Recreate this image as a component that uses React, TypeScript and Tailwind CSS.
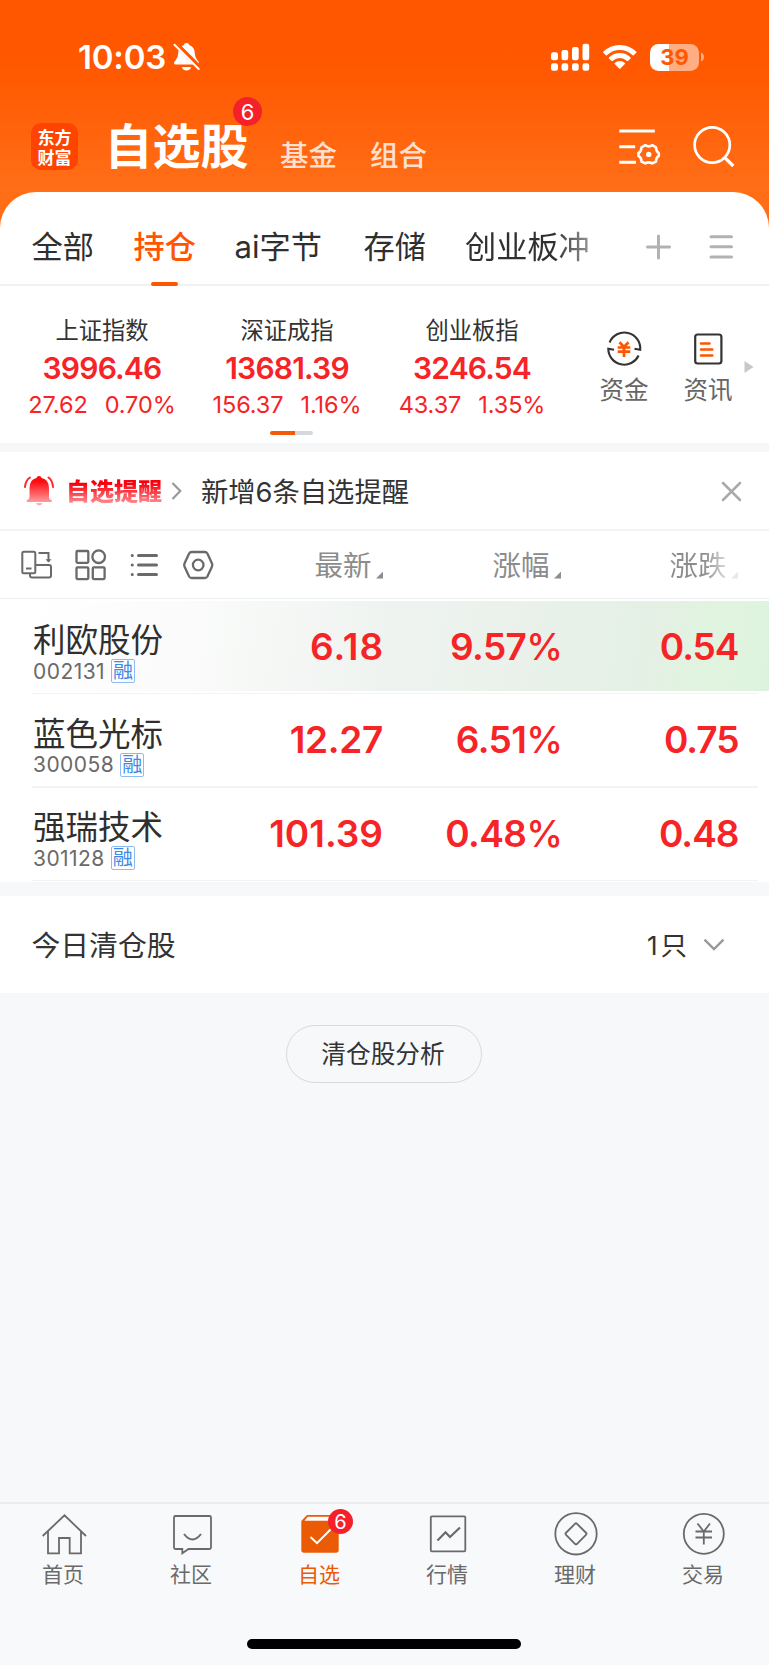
import React from "react";

const FONT = "font-['Inter','Noto_Sans_CJK_SC',sans-serif]";

function StatusBar() {
  return (
    <div className="flex h-[114px] items-center pl-[78px]">
      <span className="w-[92px] whitespace-nowrap text-[33px] font-semibold leading-none tracking-[-0.2px] text-white">10:03</span>
      <svg className="ml-[2px] h-[30px] w-[30px]" viewBox="172 43 30 30">
        <path d="M176 65.500Q174 65.500 174 63.900Q174 62.800 175.500 61.400Q178 59 178.200 54.500C178.500 49.500 180.500 47.300 183.500 46.200Q184.200 44 186.500 44Q188.800 44 189.500 46.200C193 47.500 194.600 50 194.800 54.500Q195 59 197.500 61.400Q199 62.800 199 64Q199 65.500 197 65.500Z" fill="#fff" />
        <path d="M181.700 68H191.300Q190 71.500 186.500 71.500Q183 71.500 181.700 68Z" fill="#fff" />
        <path d="M175 44L200 69" stroke="#ff5800" strokeWidth="5" />
        <path d="M174.500 45.800L198.700 70" stroke="#fff" strokeWidth="2" strokeLinecap="round" />
      </svg>
      <svg className="ml-[347.500px] h-[30px] w-[40px]" viewBox="550 42 40 30" fill="#fff">
        <rect x="551" y="52.200" width="7" height="8" rx="2.200" />
        <rect x="561.500" y="50" width="6.700" height="10.200" rx="2.200" />
        <rect x="572" y="47" width="6.700" height="13.200" rx="2.200" />
        <rect x="582.500" y="43.800" width="6.700" height="16.400" rx="2.200" />
        <rect x="551" y="63.200" width="7" height="7.600" rx="2.200" />
        <rect x="561.500" y="63.200" width="6.700" height="7.600" rx="2.200" />
        <rect x="572" y="63.200" width="6.700" height="7.600" rx="2.200" />
        <rect x="582.500" y="63.200" width="6.700" height="7.600" rx="2.200" />
      </svg>
      <svg className="ml-[13px] h-[26px] w-[34px]" viewBox="603 44 34 26" fill="#fff">
        <path d="M603.300 51.800Q610 45 619.800 45Q629.500 45 636.300 51.800Q636.700 52.300 636.300 52.800L633.700 55.300Q633.200 55.700 632.700 55.300Q627 50.100 619.800 50.100Q612.500 50.100 606.900 55.300Q606.400 55.700 605.900 55.300L603.300 52.800Q602.900 52.300 603.300 51.800Z" />
        <path d="M609 57.400Q613.600 53 619.800 53Q626 53 630.600 57.400Q631.100 57.900 630.600 58.400L628 60.900Q627.500 61.300 627 60.900Q623.800 58.100 619.800 58.100Q615.700 58.100 612.600 60.900Q612.100 61.300 611.600 60.900L609 58.400Q608.500 57.900 609 57.400Z" />
        <path d="M614.700 63Q616.900 61 619.800 61Q622.700 61 624.900 63Q625.400 63.500 624.900 64L620.400 68.500Q619.800 69 619.200 68.500L614.700 64Q614.200 63.500 614.700 63Z" />
      </svg>
      <div className="ml-[13.500px] flex h-[27px] w-[49px] items-center justify-center rounded-[8.500px] bg-[linear-gradient(90deg,#fff_0_39%,#ffad82_39%_100%)] text-[22px] font-bold leading-none text-[#ff5800]">39</div>
      <svg className="ml-[1.500px] h-[10px] w-[3px]" viewBox="0 0 3 10"><path d="M0 .5Q3 2 3 5Q3 8 0 9.500Z" fill="#ffad82" /></svg>
    </div>
  );
}

function TitleBar() {
  return (
    <div className="flex h-[78px] items-start pl-[31px]">
      <div className="mt-[9px] flex h-[47px] w-[47px] flex-col items-center justify-center rounded-[10px] bg-[#ff4300] font-['Noto_Sans_CJK_SC',sans-serif] text-[17px] font-bold leading-[19.500px] text-white">
        <span>东方</span>
        <span>财富</span>
      </div>
      <div className="relative ml-[26.500px] w-[175.500px]">
        <h1 className="mt-[9px] whitespace-nowrap text-[48px] font-bold leading-[47px] text-white">自选股</h1>
        <span className="absolute left-[128.500px] top-[-17px] flex h-[29px] w-[29px] items-center justify-center rounded-full bg-[#f4212b] text-[22px] leading-none text-white">6</span>
      </div>
      <span className="mt-[28px] w-[90px] whitespace-nowrap text-[28.500px] font-medium leading-[28px] text-[#ffe0d0]">基金</span>
      <span className="mt-[28px] w-[90px] whitespace-nowrap text-[28.500px] font-medium leading-[28px] text-[#ffe0d0]">组合</span>
      <svg className="ml-[158px] mt-[12px] h-[42px] w-[44px]" viewBox="618 126 44 42" fill="none" stroke="#fff" strokeWidth="3">
        <path d="M619.300 131H654.800M619.300 146.700H635.200M619.300 162.300H636" />
        <path d="M645.200 145.200Q648.800 147.500 652.300 145.200L656 147.300Q655.900 151.300 658.800 153V155.800Q655.900 157.500 656 161.500L652.300 163.400Q648.800 161.300 645.200 163.400L641.500 161.500Q641.600 157.500 638.500 155.800V153Q641.600 151.300 641.500 147.300Z" strokeWidth="2.600" strokeLinejoin="round" />
        <circle cx="648.700" cy="154.400" r="2.700" fill="#fff" stroke="none" />
      </svg>
      <svg className="ml-[30px] mt-[10px] h-[44px] w-[44px]" viewBox="692 124 44 44" fill="none" stroke="#fff" strokeWidth="2.700">
        <circle cx="712.200" cy="145" r="17.600" />
        <path d="M724.500 157.300L733.300 166" strokeWidth="3.200" />
      </svg>
    </div>
  );
}

function Tabs() {
  return (
    <div className="bg-[#ff6e17]">
      <nav className="flex h-[94px] items-stretch whitespace-nowrap rounded-t-[36px] border-b-2 border-[#f0f1f2] bg-white pl-[31.500px] text-[31.200px] leading-none text-[#2f2f2f]">
        <span className="flex w-[102px] items-center pt-[19px]">全部</span>
        <span className="relative flex w-[101px] items-center pt-[19px] font-medium text-[#ff5500]">
          持仓
          <i className="absolute bottom-[-2px] left-[17.500px] h-[4px] w-[27px] rounded-[2px] bg-[#ff5500]" />
        </span>
        <span className="flex w-[129px] items-center pt-[19px]">ai字节</span>
        <span className="flex w-[101.500px] items-center pt-[19px]">存储</span>
        <span className="flex w-[180px] items-center pt-[19px]">
          <span className="w-[126px] bg-[linear-gradient(90deg,#2f2f2f_70%,#999_100%)] bg-clip-text py-2 text-transparent">创业板冲</span>
        </span>
        <svg className="mt-[42px] h-[26px] w-[26px]" viewBox="645 234 26 26" stroke="#b2b2b2" strokeWidth="3" strokeLinecap="round"><path d="M647.500 247H669.500M658.500 236V258" /></svg>
        <svg className="ml-[37px] mt-[42px] h-[26px] w-[26px]" viewBox="708 234 26 26" stroke="#b2b2b2" strokeWidth="3" strokeLinecap="round"><path d="M711 236.700H731.500M711 246.800H731.500M711 257H731.500" /></svg>
      </nav>
    </div>
  );
}

function IndexCell({ name, value, change, pct }: { name: string; value: string; change: string; pct: string }) {
  return (
    <div className="flex w-[185px] flex-col items-center whitespace-nowrap text-[#f62426]">
      <span className="mt-[1px] text-[23.300px] leading-[36px] text-[#333]">{name}</span>
      <span className="mt-[-1px] text-[30px] font-semibold leading-[40px] tracking-[-0.800px]">{value}</span>
      <span className="mt-[-1px] flex gap-[17px] text-[23.500px] leading-[36px] tracking-[-0.100px]"><span>{change}</span><span>{pct}</span></span>
    </div>
  );
}

function Indices() {
  return (
    <section className="flex h-[157px] bg-white pl-[9.500px] pt-[26px]">
      <IndexCell name="上证指数" value="3996.46" change="27.62" pct="0.70%" />
      <div className="relative">
        <IndexCell name="深证成指" value="13681.39" change="156.37" pct="1.16%" />
        <i className="absolute left-[75.500px] top-[119px] h-[4px] w-[43px] rounded-full bg-[linear-gradient(90deg,#f05a0a_0_59%,#d5d8dd_59%_100%)]" />
      </div>
      <IndexCell name="创业板指" value="3246.54" change="43.37" pct="1.35%" />
      <div className="ml-[17.500px] flex w-[84px] flex-col items-center pt-[18px]">
        <svg className="h-[38px] w-[38px]" viewBox="605 330 38 38" fill="none" stroke="#333" strokeWidth="2.100">
          <path d="M609.600 342.500A15.900 15.900 0 0 1 640.200 349.800L634.500 348.700M638.600 355.500A15.900 15.900 0 0 1 608.300 348.800L614 349.700" />
          <path d="M619.500 342.300L624 347L628.500 342.300M617.700 347.500H630.300M617.700 351.700H630.300M624 347V357" stroke="#ff5500" strokeWidth="2.700" />
        </svg>
        <span className="mt-[7px] text-[24.500px] leading-[30px] text-[#666]">资金</span>
      </div>
      <div className="flex w-[84px] flex-col items-center pt-[18px]">
        <svg className="h-[38px] w-[38px]" viewBox="689 330 38 38" fill="none" stroke="#333" strokeWidth="2.200">
          <rect x="695.200" y="334.500" width="26.200" height="29" rx="2.500" />
          <path d="M701 343.500H709.500M701 349.500H712.300M701 355.500H712.300" stroke="#ff5500" strokeWidth="2.600" strokeLinecap="round" />
        </svg>
        <span className="mt-[7px] text-[24.500px] leading-[30px] text-[#666]">资讯</span>
      </div>
      <svg className="ml-[-6px] mt-[48px] h-[14px] w-[10px]" viewBox="0 0 10 14"><path d="M.5 1L9.500 7L.5 13Z" fill="#c8c8c8" /></svg>
    </section>
  );
}

function Alert() {
  return (
    <section className="flex h-[79px] items-center whitespace-nowrap border-b-2 border-[#f2f3f4] bg-white pl-[22px]">
      <svg className="h-[34px] w-[34px]" viewBox="22 475 34 34">
        <defs><linearGradient id="bell" x1="0" y1="0" x2="0" y2="1"><stop offset="0.200" stopColor="#ff0a0f" /><stop offset="1" stopColor="#ff9a9e" /></linearGradient></defs>
        <path d="M27.500 503Q26.500 503 26.500 502Q26.500 501 28 500.700Q29.500 500 29.500 498V489Q29.500 480.500 36.500 479Q37 477 39 477Q41 477 41.700 479Q49 480.500 49 489V498Q49 500 50.500 500.700Q52 501 52 502Q52 503 51 503Z" fill="url(#bell)" />
        <path d="M36 504H42.500Q41.500 506.500 39.200 506.500Q37 506.500 36 504Z" fill="#ffb0b3" />
        <path d="M25 488Q25.500 481.500 30 478.500M53 488Q52.500 481.500 48.500 478.500" stroke="#fb2a2e" strokeWidth="2" fill="none" strokeLinecap="round" />
      </svg>
      <span className="ml-[10px] mt-[2px] w-[96px] bg-[linear-gradient(180deg,#f9000c_25%,#ff9095_85%)] bg-clip-text text-[24px] font-black leading-[34px] text-transparent">自选提醒</span>
      <svg className="ml-[9px] mt-[1px] h-[20px] w-[13px]" viewBox="171 482 13 20" fill="none" stroke="#999" strokeWidth="2.200"><path d="M172.500 484L180.300 492L172.500 500" /></svg>
      <span className="ml-[17px] w-[518px] pt-[4px] text-[27.300px] leading-none text-[#333]">新增6条自选提醒</span>
      <svg className="mt-[1px] h-[24px] w-[24px]" viewBox="719 480 24 24" stroke="#aaa" strokeWidth="2.500" strokeLinecap="round"><path d="M723 484L740 501M740 484L723 501" /></svg>
    </section>
  );
}

function Corner({ faded }: { faded?: boolean }) {
  return <svg className="mb-[-18px] ml-[4px] h-[7.500px] w-[7.500px]" viewBox="0 0 7 7"><path d="M7 0V7H0Z" fill={faded ? "#e9e9ea" : "#8c8c92"} /></svg>;
}

function Toolbar() {
  return (
    <section className="flex h-[68px] items-center whitespace-nowrap border-b border-[#eceeef] bg-white pl-[20px] text-[28.500px] leading-none text-[#8c8c8c]">
      <svg className="h-[36px] w-[200px]" viewBox="20 547 200 36" fill="none" stroke="#6a6a6a" strokeWidth="2">
        <rect x="22.300" y="551.700" width="13" height="21.600" rx="1.500" />
        <path d="M26 568.500H31.500M38.500 553H48.500V561.500M30 574V575.500Q30 577.500 32 577.500H49Q51 577.500 51 575.500V567Q51 565 49 565H35.500" />
        <path d="M45.500 559.300H51.500L48.500 562.500Z" fill="#6a6a6a" stroke="none" />
        <g strokeWidth="2.300">
          <rect x="76.500" y="551" width="11.800" height="11.800" rx="1" />
          <circle cx="98.700" cy="556.700" r="6.300" />
          <rect x="76.500" y="567.300" width="11.800" height="11.800" rx="1" />
          <rect x="92.800" y="567.300" width="11.800" height="11.800" rx="1" />
        </g>
        <g strokeWidth="3" strokeLinecap="round"><path d="M138.500 555.500H156.500M138.500 565H156.500M138.500 574.500H156.500M132.200 555.500H132.300M132.200 565H132.300M132.200 574.500H132.300" /></g>
        <path d="M191.700 552H204.800Q206.500 552 207.400 553.500L212 563.500Q212.600 565 212 566.500L207.400 576.500Q206.500 578 204.800 578H191.700Q190 578 189.100 576.500L184.500 566.500Q183.900 565 184.500 563.500L189.100 553.500Q190 552 191.700 552Z" strokeWidth="2.300" />
        <circle cx="198.200" cy="565" r="5.300" strokeWidth="2.300" />
      </svg>
      <div className="flex w-[163px] items-center justify-end pt-[3px]">最新<Corner /></div>
      <div className="flex w-[178px] items-center justify-end pt-[3px]">涨幅<Corner /></div>
      <div className="flex w-[177px] items-center justify-end pt-[3px]">
        <span className="bg-[linear-gradient(90deg,#8c8c8c_60%,#dedede_100%)] bg-clip-text py-2 text-transparent">涨跌</span><Corner faded />
      </div>
    </section>
  );
}

const STOCKS = [
  { name: "利欧股份", code: "002131", price: "6.18", pct: "9.57", diff: "0.54", hot: true, spacing: "w-[202px] text-right tracking-[0.900px]" },
  { name: "蓝色光标", code: "300058", price: "12.27", pct: "6.51", diff: "0.75", hot: false, spacing: "w-[200px] text-right tracking-[-0.300px]" },
  { name: "强瑞技术", code: "301128", price: "101.39", pct: "0.48", diff: "0.48", hot: false, spacing: "w-[200px] text-right tracking-normal" },
];

function Stocks() {
  return (
    <section className="bg-white pt-[2px]">
      {STOCKS.map((s) => (
        <div key={s.code} className="h-[93.500px]">
          <div className={s.hot ? "flex h-[90px] bg-[linear-gradient(100deg,#fff_3%,#fafbfa_25%,#eff3f0_50%,#e7f1e8_75%,#e4f0e4_84%,#e0f4df_92%,#def3dd_100%)]" : "flex h-[90px]"}>
            <div className="w-[183px] whitespace-nowrap pl-[33px] pt-[23px]">
              <div className="text-[32.500px] leading-[34px] text-[#2f2f2f]">{s.name}</div>
              <div className="mt-[1px] flex h-[24px] items-center text-[21px] leading-none tracking-[0.450px] text-[#6a6a6a]">
                {s.code}
                <span className="ml-[6px] flex h-[24px] w-[24px] items-center justify-center rounded-[2px] border-[1.500px] border-[#8dbcf0] text-[20px] leading-none tracking-normal text-[#3d8ae6]">融</span>
              </div>
            </div>
            <div className="flex flex-1 items-center whitespace-nowrap text-[37px] font-semibold leading-none text-[#f62426]">
              <div className="flex w-[201px]"><span className={s.spacing}>{s.price}</span></div>
              <span className="w-[178.500px] text-right tracking-[-0.600px]">{s.pct}<span className="font-medium">%</span></span>
              <span className="w-[176px] text-right tracking-[-1px]">{s.diff}</span>
            </div>
          </div>
          <div className="ml-[32px] mr-[11px] mt-[1.500px] h-[1.500px] bg-[#f2f3f4]" />
        </div>
      ))}
    </section>
  );
}

const LABELS = ["首页", "社区", "自选", "行情", "理财", "交易"];

function NavIcon({ i }: { i: number }) {
  const c = "h-[44px] w-[48px]";
  const p = { fill: "none", stroke: "#6a6a6a", strokeWidth: 1.800 };
  if (i === 0) return <svg className={c} viewBox="40 1512 48 44" {...p}><path d="M42.700 1536L64.500 1515.300L86 1536M48 1531.500V1553.300H59V1538H69.700V1553.300H81V1531.500" /></svg>;
  if (i === 1) return <svg className={c} viewBox="168 1512 48 44" {...p}><path d="M175.500 1516H209.500Q211 1516 211 1517.500V1547.500Q211 1549 209.500 1549H188.500L182.300 1553.300V1549H175.500Q174 1549 174 1547.500V1517.500Q174 1516 175.500 1516Z" /><path d="M184 1534Q192.500 1545 201 1534" strokeWidth="2" /></svg>;
  if (i === 2) return <svg className={c} viewBox="296 1512 48 44"><path d="M307 1515H336L338.700 1520V1550Q338.700 1552.700 336 1552.700H304Q301.300 1552.700 301.300 1550V1521Z" fill="#eb5a05" /><path d="M307.800 1516.700H335V1520.800H304.500Z" fill="#fff" /><path d="M310.500 1537L317 1543.200L330.500 1529.500" fill="none" stroke="#fff" strokeWidth="2" /></svg>;
  if (i === 3) return <svg className={c} viewBox="424 1512 48 44" {...p}><rect x="430.800" y="1516.300" width="34.500" height="35" rx="1" /><path d="M437.500 1540.500L445.500 1532.300L450 1537L460 1527.500" strokeWidth="2.200" /></svg>;
  if (i === 4) return <svg className={c} viewBox="552 1512 48 44" {...p}><circle cx="576" cy="1533.800" r="20.700" /><rect x="568.200" y="1526" width="15.600" height="15.600" rx="1.500" transform="rotate(45 576 1533.800)" /></svg>;
  return <svg className={c} viewBox="680 1512 48 44" {...p}><circle cx="703.800" cy="1533.800" r="20" /><path d="M697.500 1523.500L703.800 1531.500L710 1523.500M695.500 1531.500H712M695.500 1537.500H712M703.800 1531.500V1544.500" /></svg>;
}

export default function App() {
  return (
    <div className={`flex h-[1665px] w-[769px] flex-col overflow-hidden bg-[#f7f8fa] ${FONT}`}>
      <header className="h-[192px] bg-[linear-gradient(180deg,#ff5600_0%,#ff5800_35%,#ff6f18_100%)]">
        <StatusBar />
        <TitleBar />
      </header>
      <Tabs />
      <Indices />
      <div className="h-[9px] bg-[#f6f7f9]" />
      <Alert />
      <Toolbar />
      <Stocks />
      <section className="mt-[14.500px] flex h-[97px] items-center bg-white pl-[31.500px] text-[#333]">
        <span className="w-[615.500px] pt-[3px] text-[28.800px] leading-none">今日清仓股</span>
        <span className="flex w-[55px] items-center gap-[3px] pt-[2px] text-[26px] leading-none">1<span className="text-[26.500px]">只</span></span>
        <svg className="h-[14px] w-[24px]" viewBox="701 939 24 14" fill="none" stroke="#999" strokeWidth="2.400"><path d="M703.500 940.700L713 950L722.500 940.700" /></svg>
      </section>
      <button className="ml-[286px] mt-[31.500px] h-[58.500px] w-[196px] shrink-0 rounded-full border-[1.500px] border-[#d8dadd] pr-[2px] pt-[2px] text-[24.700px] leading-none text-[#333]">清仓股分析</button>
      <footer className="mt-auto h-[163px] border-t-2 border-[#eaecee] bg-[#f8f9fb]">
        <div className="grid h-[135px] w-[768px] grid-cols-6">
          {LABELS.map((label, i) => (
            <div key={label} className="relative flex flex-col items-center pt-[8px]">
              <NavIcon i={i} />
              {i === 2 && <span className="absolute left-[72px] top-[5px] flex h-[25px] w-[25px] items-center justify-center rounded-full bg-[#f4212b] text-[20px] leading-none text-white">6</span>}
              <span className={i === 2 ? "mt-[6px] pr-[2px] text-[21px] leading-[26px] text-[#eb5a05]" : "mt-[6px] pr-[2px] text-[21px] leading-[26px] text-[#6a6a6a]"}>{label}</span>
            </div>
          ))}
        </div>
        <div className="ml-[247px] h-[10px] w-[274px] rounded-full bg-black" />
      </footer>
    </div>
  );
}
